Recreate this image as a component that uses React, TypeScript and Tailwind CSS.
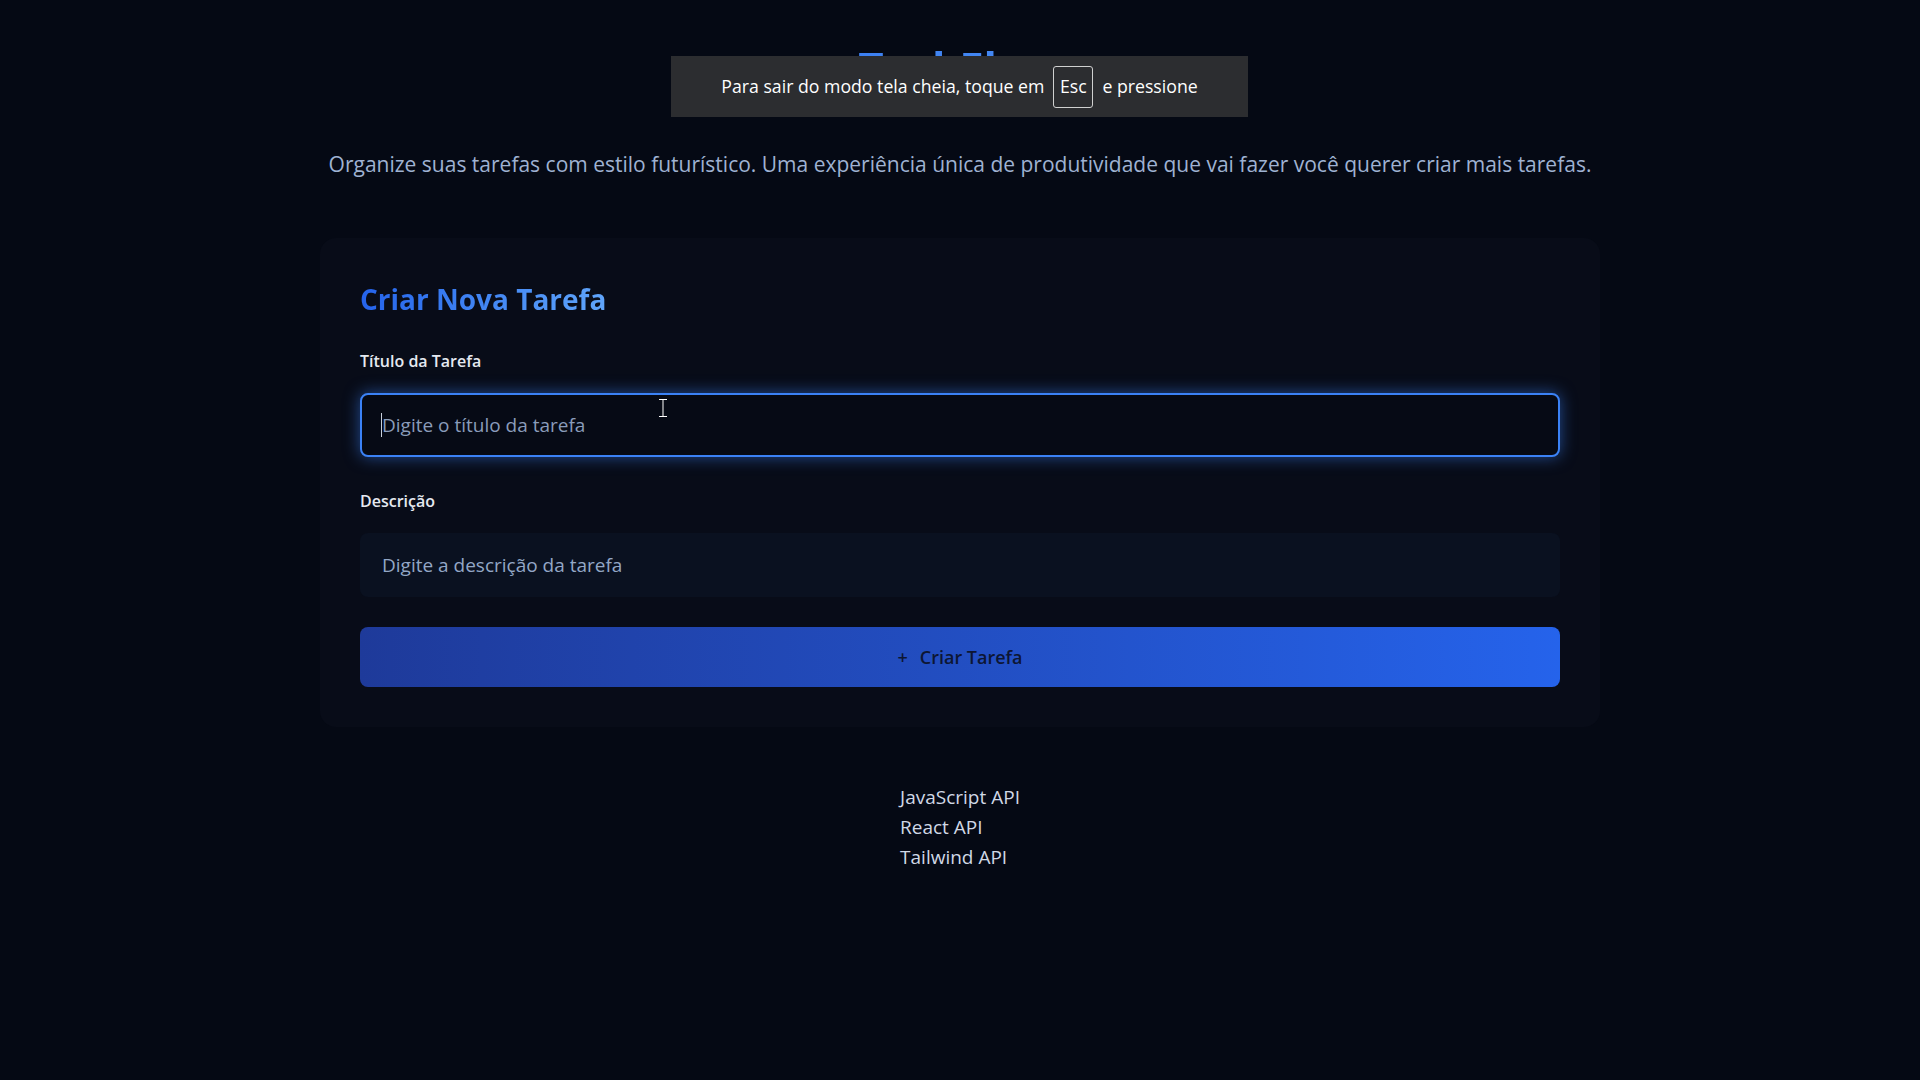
import React from "react";

export default function App() {
  return (
    <div className="relative min-h-screen bg-[#050914] font-['Open_Sans','Noto_Sans',sans-serif]">
      <div className="mx-auto max-w-7xl pt-[44px]">
        <h1 className="bg-linear-to-r from-[#2563eb] to-[#60a5fa] bg-clip-text text-center text-[44px] leading-[48px] font-bold text-transparent">
          TaskFlow
        </h1>
        <p className="mt-[58px] text-center text-[21px] leading-7 text-[#9fb2d2]">
          Organize suas tarefas com estilo futurístico. Uma experiência única de produtividade que vai fazer você querer criar mais tarefas.
        </p>

        <div className="mt-[60px] rounded-2xl bg-[#080c18] p-10">
          <h2 className="mt-[3px] inline-block bg-linear-to-r from-[#2563eb] to-[#60a5fa] bg-clip-text text-[28px] leading-9 font-bold text-transparent">
            Criar Nova Tarefa
          </h2>

          <div className="mt-[32px]">
            <label className="block text-base leading-6 font-semibold text-[#e5e9f0]">
              Título da Tarefa
            </label>
            <div className="relative mt-5">
              <input
                type="text"
                placeholder="Digite o título da tarefa"
                className="block h-16 w-full rounded-lg border-2 border-[#3b82f6] bg-[#060a15] px-5 text-[19px] text-[#e5e9f0] shadow-[0_0_16px_rgba(59,130,246,0.55)] outline-none placeholder:text-[#8a9cba]"
              />
              <span className="pointer-events-none absolute top-[20px] left-[21px] h-[24px] w-px bg-[#c7cfdc]" />
            </div>
          </div>

          <div className="mt-8">
            <label className="block text-base leading-6 font-semibold text-[#e5e9f0]">
              Descrição
            </label>
            <input
              type="text"
              placeholder="Digite a descrição da tarefa"
              className="mt-5 block h-16 w-full rounded-lg border-2 border-transparent bg-[#0a1120] px-5 text-[19px] text-[#e5e9f0] outline-none placeholder:text-[#93a7c6]"
            />
          </div>

          <button className="mt-[30px] flex h-[60px] w-full items-center justify-center gap-3 rounded-lg bg-linear-to-r from-[#1e3a9a] to-[#2563eb] text-lg font-semibold text-[#0d1633]">
            <span>+</span>
            <span>Criar Tarefa</span>
          </button>
        </div>

        <div className="mt-[55px] flex justify-center">
          <ul className="text-[19px] leading-[30px] text-[#d0d8e6]">
            <li>JavaScript API</li>
            <li>React API</li>
            <li>Tailwind API</li>
          </ul>
        </div>
      </div>

      {/* Browser fullscreen notice */}
      <div className="absolute top-[56px] left-[671px] flex h-[61px] w-[577px] items-center justify-center gap-[9px] bg-[#2c2d30] text-[17.7px] text-white">
        <span>Para sair do modo tela cheia, toque em</span>
        <span className="flex h-[42px] w-[40px] items-center justify-center rounded-[3px] border border-[#d0d0d0]">Esc</span>
        <span>e pressione</span>
      </div>

      {/* Mouse I-beam cursor */}
      <svg className="pointer-events-none absolute top-[399px] left-[658px]" width="10" height="18" viewBox="0 0 10 18">
        <path d="M1 0.5 H4 M6 0.5 H9 M5 1 V17 M1 17.5 H4 M6 17.5 H9" stroke="#ffffff" strokeWidth="1" fill="none" />
        <path d="M4 0.5 H6 M4 17.5 H6" stroke="#ffffff" strokeWidth="1" />
      </svg>
    </div>
  );
}
